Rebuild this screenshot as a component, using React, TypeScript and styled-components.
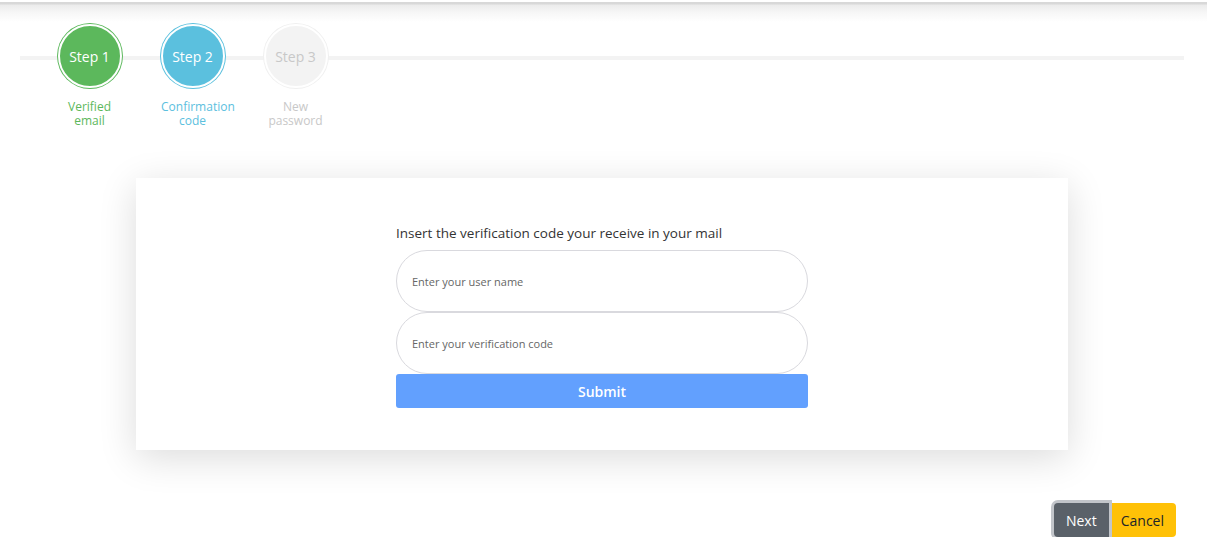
import styled, { createGlobalStyle } from "styled-components";

const GlobalStyle = createGlobalStyle`
  body {
    margin: 0;
    background: #fff;
    font-family: "Open Sans", "Noto Sans", sans-serif;
  }
`;

const TopBar = styled.div`
  margin-top: 2px;
  height: 20px;
  background: linear-gradient(to bottom, #d8d8d8 0, #d8d8d8 2px, #ebebeb 3px, #f6f6f6 10px, #fff 100%);
`;

const Stepper = styled.div`
  position: relative;
  margin: 0 23px 0 20px;
  display: flex;
  padding-left: 18px;

  &::before {
    content: "";
    position: absolute;
    left: 0;
    right: 0;
    top: 34px;
    height: 4px;
    background: #f3f3f3;
  }
`;

const Step = styled.div`
  position: relative;
  width: 103px;
  display: flex;
  flex-direction: column;
  align-items: center;
`;

type Tone = { $fill: string; $ring: string; $text: string };

const Circle = styled.div<Tone>`
  margin-top: 2px;
  width: 60px;
  height: 60px;
  border-radius: 50%;
  border: 2px solid #fff;
  box-shadow: 0 0 0 1px ${(p) => p.$ring};
  background: ${(p) => p.$fill};
  color: ${(p) => p.$text};
  font-size: 14px;
  display: flex;
  align-items: center;
  justify-content: center;
`;

const StepLabel = styled.div<{ $color: string }>`
  width: 63px;
  margin-top: 12px;
  font-size: 12px;
  line-height: 14px;
  text-align: center;
  color: ${(p) => p.$color};
`;

const Card = styled.div`
  width: 932px;
  margin: 50px 0 0 136px;
  background: #fff;
  padding: 46px 0 42px;
  box-sizing: border-box;
  box-shadow: 0 8px 36px rgba(0, 0, 0, 0.14);
`;

const Form = styled.form`
  width: 412px;
  margin: 0 auto;
  display: flex;
  flex-direction: column;
`;

const Prompt = styled.label`
  font-size: 13.5px;
  line-height: 18px;
  color: #333;
  margin-bottom: 8px;
`;

const Input = styled.input`
  height: 62px;
  box-sizing: border-box;
  border: 1px solid #d9d9de;
  border-radius: 31px;
  padding: 0 15px;
  font-family: inherit;
  font-size: 11px;
  color: #333;
  background: #fff;
  outline: none;

  &::placeholder {
    color: #666;
  }
`;

const Submit = styled.button`
  height: 34px;
  border: none;
  border-radius: 3px;
  background: #62a0fe;
  color: #fff;
  font-family: inherit;
  font-size: 14px;
  font-weight: 600;
`;

const Footer = styled.div`
  display: flex;
  justify-content: flex-end;
  margin-top: 53px;
  padding-right: 31px;
`;

const Group = styled.div`
  display: flex;
`;

const Btn = styled.button<{ $bg: string; $color: string; $focus?: boolean }>`
  position: relative;
  z-index: ${(p) => (p.$focus ? 1 : 0)};
  height: 34px;
  padding: 0 12px;
  border: none;
  background: ${(p) => p.$bg};
  color: ${(p) => p.$color};
  font-family: inherit;
  font-size: 14px;
  border-radius: ${(p) => (p.$focus ? "4px 0 0 4px" : "0 4px 4px 0")};
  box-shadow: ${(p) => (p.$focus ? "0 0 0 3px #c2c5ca" : "none")};
`;

const steps = [
  { n: 1, label: ["Verified", "email"], fill: "#5cb85c", ring: "#5cb85c", text: "#fff", color: "#5cb85c" },
  { n: 2, label: ["Confirmation", "code"], fill: "#5bc0de", ring: "#5bc0de", text: "#fff", color: "#5bc0de" },
  { n: 3, label: ["New", "password"], fill: "#f3f3f3", ring: "#f0f0f0", text: "#c8c8c8", color: "#c8c8c8" },
];

const App = () => {
  return (
    <>
      <GlobalStyle />
      <TopBar />
      <Stepper>
        {steps.map((s) => (
          <Step key={s.n}>
            <Circle $fill={s.fill} $ring={s.ring} $text={s.text}>
              Step {s.n}
            </Circle>
            <StepLabel $color={s.color}>
              {s.label[0]}
              <br />
              {s.label[1]}
            </StepLabel>
          </Step>
        ))}
      </Stepper>
      <Card>
        <Form onSubmit={(e) => e.preventDefault()}>
          <Prompt>Insert the verification code your receive in your mail</Prompt>
          <Input placeholder="Enter your user name" />
          <Input placeholder="Enter your verification code" />
          <Submit type="submit">Submit</Submit>
        </Form>
      </Card>
      <Footer>
        <Group>
          <Btn $bg="#5a6169" $color="#fff" $focus>
            Next
          </Btn>
          <Btn $bg="#ffc107" $color="#212529">
            Cancel
          </Btn>
        </Group>
      </Footer>
    </>
  );
};

export default App;
